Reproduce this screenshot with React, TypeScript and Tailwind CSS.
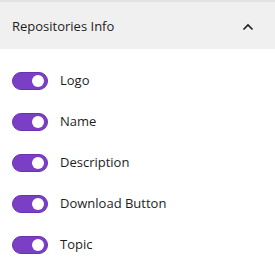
import React from "react";

const items = ["Logo", "Name", "Description", "Download Button", "Topic"];

const Toggle: React.FC = () => (
  <span className="relative inline-flex h-[18px] w-9 shrink-0 items-center rounded-full bg-[#7b3fc6] border border-[#6a32b3]">
    <span className="absolute right-[3px] h-3 w-3 rounded-full bg-white"></span>
  </span>
);

const App: React.FC = () => {
  return (
    <div
      className="w-[275px] h-[271px] bg-white text-[#1e1e1e]"
      style={{ fontFamily: '"Open Sans", "Noto Sans", sans-serif' }}
    >
      <div className="border-t-2 border-[#e3e3e3] bg-[#f0f0f0] h-[49px] flex items-center justify-between pl-3 pr-[21px]">
        <span className="text-[13px] pt-[2px]">Repositories Info</span>
        <svg width="12" height="8" viewBox="0 0 12 8" fill="none" className="mt-[2px]">
          <path d="M1.5 6.5 L6 2 L10.5 6.5" stroke="#1e1e1e" strokeWidth="1.6" />
        </svg>
      </div>

      <div className="pt-[11px]">
        {items.map((label) => (
          <div key={label} className="h-[41px] flex items-center gap-3 pl-3">
            <Toggle />
            <span className="text-[13px]">{label}</span>
          </div>
        ))}
      </div>
    </div>
  );
};

export default App;
